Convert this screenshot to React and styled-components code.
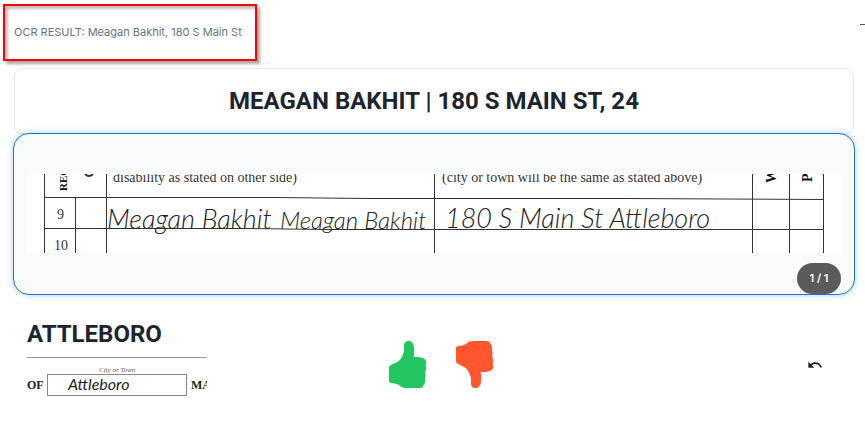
import React from "react";
import styled, { createGlobalStyle } from "styled-components";
import { MdUndo } from "react-icons/md";

const GlobalStyle = createGlobalStyle`
  * {
    box-sizing: border-box;
  }

  body {
    margin: 0;
    background: #fff;
    color: #1c252e;
    font-family: Inter, sans-serif;
  }
`;

const Header = styled.header`
  display: flex;
  justify-content: space-between;
  align-items: flex-start;
  padding: 4px 0 7px 3px;
`;

const OcrResult = styled.p`
  margin: 0;
  width: 254px;
  padding: 17px 9px 18px;
  border: 2px solid #fe0000;
  box-shadow: 3px 3px 3px rgba(0, 0, 0, 0.35), inset 3px 3px 3px rgba(0, 0, 0, 0.25);
  color: #637381;
  font-size: 11px;
  line-height: 18px;
  white-space: nowrap;
`;

const MenuDash = styled.span`
  width: 5px;
  height: 1px;
  margin-top: 20px;
  background: #555;
`;

const Main = styled.main`
  padding: 0 10px 0 13px;
`;

const TitleCard = styled.section`
  margin: 0 1px;
  padding: 17px 16px;
  border: 1px solid #e6e9ec;
  border-radius: 8px;
  text-align: center;
`;

const Title = styled.h1`
  margin: 0;
  font-family: Roboto, sans-serif;
  font-size: 24px;
  font-weight: 700;
  line-height: 30px;
`;

const ScanCard = styled.section`
  display: flex;
  flex-direction: column;
  margin-top: -1px;
  padding: 40px 13px 0;
  border: 1px solid #1976d2;
  border-radius: 16px;
  background: #f9fafc;
  box-shadow: 0 0 6px rgba(25, 118, 210, 0.35);
`;

const Scan = styled.svg`
  display: block;
  width: 100%;
  background: #fff;
`;

const Counter = styled.span`
  align-self: flex-end;
  min-width: 44px;
  margin-top: 10px;
  border-radius: 16px;
  background: #5b5b5b;
  color: #fff;
  font-size: 11px;
  font-weight: 600;
  line-height: 31px;
  text-align: center;
`;

const Review = styled.section`
  display: grid;
  grid-template-columns: 1fr auto 1fr;
  align-items: center;
  padding: 24px 0 0 14px;
`;

const Town = styled.div`
  padding-bottom: 14px;
`;

const TownScan = styled(Scan)`
  width: 180px;
  margin-top: 7px;
`;

const Votes = styled.div`
  display: flex;
  gap: 29px;
`;

const IconButton = styled.button`
  display: flex;
  padding: 0;
  border: 0;
  background: none;
  color: ${({ $color }) => $color};
  cursor: pointer;
`;

const UndoButton = styled(IconButton)`
  justify-self: end;
  margin-right: 32px;
`;

function Thumb({ down }) {
  return (
    <svg width="38" height="47" viewBox="0 0 114 141" fill="currentColor" aria-hidden="true">
      <path
        transform={down ? "matrix(1 0 0 -1 0 141)" : undefined}
        d="M0 80C0 75 4 73 10 70C19 66 28 63 34 55C40 47 44 37 45 27V12C46 3 51 0 58 0C69 0 74 8 75 19C76 30 76 40 74 49C84 48 92 48 99 50C108 52 113 58 112 66C111 69 110 71 110 74C113 79 112 84 110 89C109 92 109 94 109 97C111 104 109 110 108 114C109 122 108 128 104 131C103 138 98 141 90 141H50C41 141 36 137 30 132C23 127 14 128 5 125C1 124 0 122 0 119Z"
      />
    </svg>
  );
}

function FormScan() {
  return (
    <Scan viewBox="0 0 814 79" role="img" aria-label="Line 9 of the form">
      <g fill="none" stroke="#333">
        <path d="M17.500 0V79M48.500 23V79M79.500 0V79M407.500 0V79M725.500 0V79M762.500 0V79M796.500 0V79" />
        <path d="M17 23.500H250L340 24.500H600L796 25.500M17 54.500H220L300 55.500H796" />
        <path d="M58 0Q62 4 66 0" strokeWidth="2" />
      </g>
      <g fill="#333" fontFamily="Liberation Serif, serif" fontSize="14">
        <text x="86" y="8">disability as stated on other side)</text>
        <text x="415" y="8">(city or town will be the same as stated above)</text>
        <text x="30" y="45">9</text>
        <text x="27" y="76">10</text>
      </g>
      <g fill="#111" fontFamily="Liberation Serif, serif" fontSize="14" fontWeight="700">
        <text transform="translate(40 17) rotate(-90)" fontSize="11">REC</text>
        <text transform="translate(749 9) rotate(-90)">W</text>
        <text transform="translate(785 8) rotate(-90)">P</text>
      </g>
      <g fill="#222" fontFamily="Lato, sans-serif" fontStyle="italic" fontWeight="300">
        <text x="80" y="55" fontSize="27">Meagan Bakhit</text>
        <text x="253" y="55" fontSize="24">Meagan Bakhit</text>
        <text x="418" y="54" fontSize="27">180 S Main St Attleboro</text>
      </g>
    </Scan>
  );
}

function CityScan() {
  return (
    <TownScan viewBox="0 0 180 40" role="img" aria-label="City or town field">
      <path d="M0 1.500H180" stroke="#999" />
      <rect x="20.500" y="18.500" width="139" height="21" fill="none" stroke="#888" />
      <g fill="#222" fontFamily="Liberation Serif, serif">
        <text x="72" y="16" fontSize="7" fontStyle="italic" fill="#555">City or Town</text>
        <text x="0" y="33" fontSize="12" fontWeight="700">OF</text>
        <text x="164" y="33" fontSize="12" fontWeight="700">MA</text>
      </g>
      <text x="41" y="34" fontFamily="Lato, sans-serif" fontStyle="italic" fontSize="16" fill="#222">
        Attleboro
      </text>
    </TownScan>
  );
}

export default function App() {
  return (
    <>
      <GlobalStyle />
      <Header>
        <OcrResult>OCR RESULT: Meagan Bakhit, 180 S Main St</OcrResult>
        <MenuDash />
      </Header>
      <Main>
        <TitleCard>
          <Title>MEAGAN BAKHIT | 180 S MAIN ST, 24</Title>
        </TitleCard>
        <ScanCard>
          <FormScan />
          <Counter>1 / 1</Counter>
        </ScanCard>
        <Review>
          <Town>
            <Title as="h2">ATTLEBORO</Title>
            <CityScan />
          </Town>
          <Votes>
            <IconButton type="button" aria-label="Approve" $color="#22c55e">
              <Thumb />
            </IconButton>
            <IconButton type="button" aria-label="Reject" $color="#ff5630">
              <Thumb down />
            </IconButton>
          </Votes>
          <UndoButton type="button" aria-label="Undo" $color="#1c252e">
            <MdUndo size={16} />
          </UndoButton>
        </Review>
      </Main>
    </>
  );
}
